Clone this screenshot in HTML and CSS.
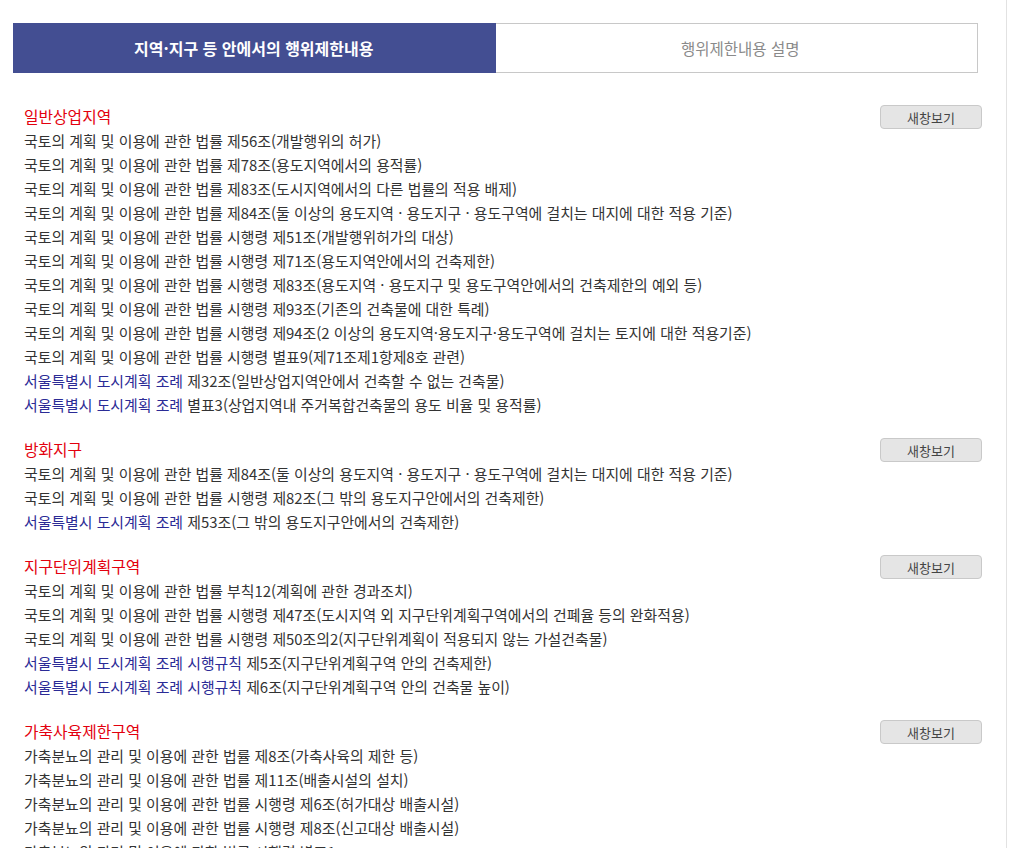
FILE: index.html
```html
<!DOCTYPE html>
<html lang="ko">
<head>
    <meta charset="UTF-8">
    <title>행위제한내용</title>
    <link rel="stylesheet" href="styles.css">
</head>
<body>
    <div class="wrap">
        <div class="tabs">
            <div class="tab on">지역·지구 등 안에서의 행위제한내용</div>
            <div class="tab">행위제한내용 설명</div>
        </div>

        <div class="list">
            <div class="zone">
                <div class="zone-head">
                    <span class="zone-name">일반상업지역</span>
                    <button class="btn-pop">새창보기</button>
                </div>
                <ul>
                    <li>국토의 계획 및 이용에 관한 법률 제56조(개발행위의 허가)</li>
                    <li>국토의 계획 및 이용에 관한 법률 제78조(용도지역에서의 용적률)</li>
                    <li>국토의 계획 및 이용에 관한 법률 제83조(도시지역에서의 다른 법률의 적용 배제)</li>
                    <li>국토의 계획 및 이용에 관한 법률 제84조(둘 이상의 용도지역 · 용도지구 · 용도구역에 걸치는 대지에 대한 적용 기준)</li>
                    <li>국토의 계획 및 이용에 관한 법률 시행령 제51조(개발행위허가의 대상)</li>
                    <li>국토의 계획 및 이용에 관한 법률 시행령 제71조(용도지역안에서의 건축제한)</li>
                    <li>국토의 계획 및 이용에 관한 법률 시행령 제83조(용도지역 · 용도지구 및 용도구역안에서의 건축제한의 예외 등)</li>
                    <li>국토의 계획 및 이용에 관한 법률 시행령 제93조(기존의 건축물에 대한 특례)</li>
                    <li>국토의 계획 및 이용에 관한 법률 시행령 제94조(2 이상의 용도지역·용도지구·용도구역에 걸치는 토지에 대한 적용기준)</li>
                    <li>국토의 계획 및 이용에 관한 법률 시행령 별표9(제71조제1항제8호 관련)</li>
                    <li><a href="#">서울특별시 도시계획 조례</a> 제32조(일반상업지역안에서 건축할 수 없는 건축물)</li>
                    <li><a href="#">서울특별시 도시계획 조례</a> 별표3(상업지역내 주거복합건축물의 용도 비율 및 용적률)</li>
                </ul>
            </div>

            <div class="zone">
                <div class="zone-head">
                    <span class="zone-name">방화지구</span>
                    <button class="btn-pop">새창보기</button>
                </div>
                <ul>
                    <li>국토의 계획 및 이용에 관한 법률 제84조(둘 이상의 용도지역 · 용도지구 · 용도구역에 걸치는 대지에 대한 적용 기준)</li>
                    <li>국토의 계획 및 이용에 관한 법률 시행령 제82조(그 밖의 용도지구안에서의 건축제한)</li>
                    <li><a href="#">서울특별시 도시계획 조례</a> 제53조(그 밖의 용도지구안에서의 건축제한)</li>
                </ul>
            </div>

            <div class="zone">
                <div class="zone-head">
                    <span class="zone-name">지구단위계획구역</span>
                    <button class="btn-pop">새창보기</button>
                </div>
                <ul>
                    <li>국토의 계획 및 이용에 관한 법률 부칙12(계획에 관한 경과조치)</li>
                    <li>국토의 계획 및 이용에 관한 법률 시행령 제47조(도시지역 외 지구단위계획구역에서의 건폐율 등의 완화적용)</li>
                    <li>국토의 계획 및 이용에 관한 법률 시행령 제50조의2(지구단위계획이 적용되지 않는 가설건축물)</li>
                    <li><a href="#">서울특별시 도시계획 조례 시행규칙</a> 제5조(지구단위계획구역 안의 건축제한)</li>
                    <li><a href="#">서울특별시 도시계획 조례 시행규칙</a> 제6조(지구단위계획구역 안의 건축물 높이)</li>
                </ul>
            </div>

            <div class="zone">
                <div class="zone-head">
                    <span class="zone-name">가축사육제한구역</span>
                    <button class="btn-pop">새창보기</button>
                </div>
                <ul>
                    <li>가축분뇨의 관리 및 이용에 관한 법률 제8조(가축사육의 제한 등)</li>
                    <li>가축분뇨의 관리 및 이용에 관한 법률 제11조(배출시설의 설치)</li>
                    <li>가축분뇨의 관리 및 이용에 관한 법률 시행령 제6조(허가대상 배출시설)</li>
                    <li>가축분뇨의 관리 및 이용에 관한 법률 시행령 제8조(신고대상 배출시설)</li>
                    <li>가축분뇨의 관리 및 이용에 관한 법률 시행령 별표1</li>
                </ul>
            </div>
        </div>
    </div>
</body>
</html>
```

FILE: styles.css
```css
html, body {
    margin: 0;
    padding: 0;
    background: #fff;
}
body {
    font-family: "Noto Sans CJK KR", "Noto Sans", sans-serif;
    font-size: 14.9px;
    color: #333;
}
.wrap {
    width: 1007px;
    min-height: 100vh;
    box-sizing: border-box;
    border-right: 1px solid #e2e2e2;
    padding: 23px 0 0 13px;
}
/* 상단 탭 */
.tabs {
    display: flex;
    width: 965px;
    height: 50px;
}
.tab {
    width: 50%;
    display: flex;
    align-items: center;
    justify-content: center;
    box-sizing: border-box;
    text-indent: 8px;
    border: 1px solid #c8c8c8;
    border-left: none;
    font-size: 15.5px;
    color: #8a8a8a;
}
.tab.on {
    text-indent: 0;
    background: #434e92;
    border-color: #434e92;
    color: #fff;
    font-size: 16px;
    font-weight: bold;
}
/* 행위제한 목록 */
.list {
    width: 969px;
    padding: 31px 0 0 11px;
    box-sizing: border-box;
}
.zone {
    margin-bottom: 20px;
}
.zone-head {
    display: flex;
    justify-content: space-between;
    align-items: flex-end;
    height: 25px;
}
.zone-name {
    color: #e3000e;
    font-size: 15.8px;
    line-height: 24px;
}
.btn-pop {
    width: 102px;
    height: 24px;
    padding: 0;
    background: #e5e5e5;
    border: 1px solid #c9c9c9;
    border-radius: 4px;
    font-family: inherit;
    font-size: 13px;
    color: #444;
    cursor: pointer;
}
.zone ul {
    list-style: none;
    margin: 0;
    padding: 0;
}
.zone li {
    line-height: 24px;
    white-space: nowrap;
}
.zone li a {
    color: #2b2b96;
    text-decoration: none;
}
```
